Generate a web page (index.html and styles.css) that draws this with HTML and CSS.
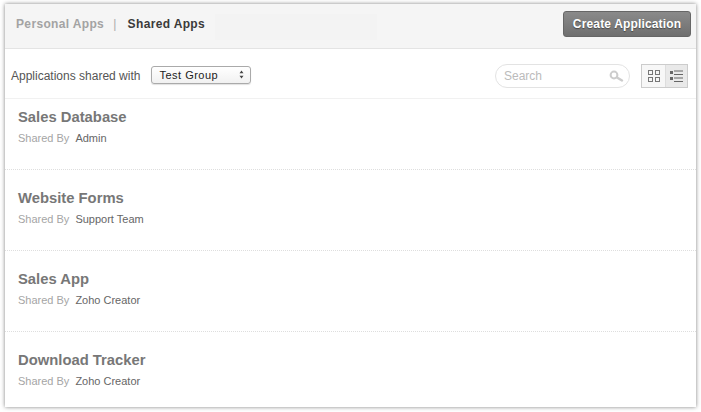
FILE: index.html
```html
<!DOCTYPE html>
<html lang="en">
<head>
<meta charset="utf-8">
<title>Shared Apps</title>
<link rel="stylesheet" href="styles.css">
</head>
<body>
<main class="panel">
  <header class="topbar">
    <nav class="tabs">
      <span class="tab">Personal Apps</span>
      <span class="sep">|</span>
      <span class="tab tab-active">Shared Apps</span>
      <span class="tab-slot"></span>
    </nav>
    <button class="create">Create Application</button>
  </header>
  <section class="filter">
    <label class="filter-label">Applications shared with</label>
    <div class="select"><span>Test Group</span>
      <svg class="updown" width="5" height="9" viewBox="0 0 5 9"><path d="M2.5 0.5 L4.5 3.2 H0.5Z M2.5 8.5 L4.5 5.8 H0.5Z" fill="#444"/></svg>
    </div>
    <div class="spacer"></div>
    <div class="search"><span>Search</span>
      <svg class="lens" width="15" height="12" viewBox="0 0 15 12"><circle cx="5" cy="5" r="3.4" fill="none" stroke="#ccc" stroke-width="2"/><path d="M8 7.5 L13 10.5" stroke="#ccc" stroke-width="2.4" stroke-linecap="round"/></svg>
    </div>
    <div class="views">
      <div class="view">
        <svg width="12" height="12" viewBox="0 0 12 12"><g fill="none" stroke="#777"><rect x="0.5" y="0.5" width="4" height="4"/><rect x="7.5" y="0.5" width="4" height="4"/><rect x="0.5" y="7.5" width="4" height="4"/><rect x="7.5" y="7.5" width="4" height="4"/></g></svg>
      </div>
      <div class="view view-on">
        <svg width="13" height="12" viewBox="0 0 13 12"><g fill="#666"><rect x="0" y="1" width="3" height="3"/><rect x="0" y="7" width="3" height="3"/><rect x="4" y="0.5" width="9" height="1"/><rect x="4" y="4" width="9" height="1"/><rect x="4" y="7.5" width="9" height="1"/><rect x="4" y="11" width="9" height="1"/></g></svg>
      </div>
    </div>
  </section>
  <ul class="apps">
    <li class="app"><h2>Sales Database</h2><p><span class="by">Shared By</span><span class="owner">Admin</span></p></li>
    <li class="app"><h2>Website Forms</h2><p><span class="by">Shared By</span><span class="owner">Support Team</span></p></li>
    <li class="app"><h2>Sales App</h2><p><span class="by">Shared By</span><span class="owner">Zoho Creator</span></p></li>
    <li class="app"><h2>Download Tracker</h2><p><span class="by">Shared By</span><span class="owner">Zoho Creator</span></p></li>
  </ul>
</main>
</body>
</html>
```
FILE: styles.css
```css
* { box-sizing: border-box; }
html, body { margin: 0; height: 100%; background: #fff; }
body { padding: 4px 5px; font-family: "Liberation Sans", Arial, sans-serif; overflow: hidden; }
.panel {
  width: 691px; height: 403px; background: #fff;
  box-shadow: 0 0 4px rgba(0,0,0,.5);
  display: flex; flex-direction: column;
}
.topbar {
  height: 45px; flex: none; background: #f5f5f5; border-bottom: 1px solid #e4e4e4;
  display: flex; align-items: center; justify-content: space-between; padding: 0 5px 5px 11px;
}
.tabs { display: flex; align-items: center; font-size: 12px; font-weight: bold; letter-spacing: .35px; }
.tab { color: #a3a3a3; }
.tab-active { color: #3a3a3a; }
.tab-slot { width: 162px; height: 26px; margin: 6px 0 0 10px; background: #f3f3f3; }
.sep { color: #aaa; font-weight: normal; margin: 0 11px 0 9px; }
.create {
  width: 128px; height: 26px; padding: 0; border: 1px solid #666; border-radius: 3px;
  background: linear-gradient(#8a8a8a, #6f6f6f); color: #fff; font: bold 12px "Liberation Sans", Arial, sans-serif;
  letter-spacing: .15px; text-shadow: 0 1px 1px rgba(0,0,0,.4);
}
.filter {
  height: 50px; flex: none; border-bottom: 1px solid #f1f1f1;
  display: flex; align-items: center; padding: 4px 8px 0 6px;
}
.filter-label { font-size: 12px; color: #555; }
.select {
  margin: -2px 0 0 11px; width: 100px; height: 18px; border: 1px solid #aaa; border-radius: 3px;
  background: linear-gradient(#fff, #f1f1f1); box-shadow: 0 1px 1px rgba(0,0,0,.12);
  display: flex; align-items: center; justify-content: space-between; padding: 0 6px 0 7px;
  font-size: 11px; letter-spacing: .5px; color: #222;
}
.spacer { flex: 1; }
.search {
  width: 135px; height: 24px; border: 1px solid #e3e3e3; border-radius: 12px;
  display: flex; align-items: center; justify-content: space-between; padding: 0 5px 0 8px;
  font-size: 12px; color: #bbb;
}
.views { display: flex; margin-left: 11px; border: 1px solid #ccc; height: 24px; }
.view { width: 23px; display: flex; align-items: center; justify-content: center; background: #f7f7f7; }
.view-on { width: 22px; background: #e9e9e9; border-left: 1px solid #ddd; }
.apps { list-style: none; margin: 0; padding: 0; flex: 1; }
.app { height: 81px; padding: 19px 13px 0; border-bottom: 1px dotted #dedede; }
.app:first-child { height: 71px; padding-top: 9px; }
.app:last-child { border-bottom: 0; }
.app h2 { margin: 0; font-size: 14.8px; line-height: 18px; font-weight: bold; color: #777; }
.app p { margin: 5px 0 0; font-size: 11px; line-height: 14px; display: flex; gap: 6px; }
.by { color: #a5a5a5; }
.owner { color: #666; }
```
